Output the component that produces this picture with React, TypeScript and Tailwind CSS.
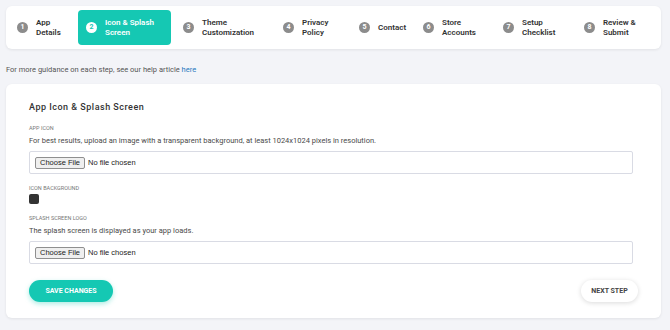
const steps = [
  { n: 1, a: "App", b: "Details", w: "w-[65px]" },
  { n: 2, a: "Icon & Splash", b: "Screen", w: "w-[93px]", active: true },
  { n: 3, a: "Theme", b: "Customization", w: "w-[96px]" },
  { n: 4, a: "Privacy", b: "Policy", w: "w-[72px]" },
  { n: 5, a: "Contact", b: "", w: "w-[60px]" },
  { n: 6, a: "Store", b: "Accounts", w: "w-[76px]" },
  { n: 7, a: "Setup", b: "Checklist", w: "w-[77px]" },
  { n: 8, a: "Review &", b: "Submit", w: "w-[77px]" },
]

function FileField() {
  return (
    <div className="mr-[5px] flex h-[23px] items-center rounded-[2px] border border-[#d9dbe4] bg-white pl-[5px] font-['Liberation_Sans',Arial,sans-serif] text-[7.5px] text-[#222]">
      <span className="flex h-[12px] items-center rounded-[2px] border border-[#8f8f8f] bg-[#efefef] px-[4px]">Choose File</span>
      <span className="ml-[3px]">No file chosen</span>
    </div>
  )
}

export default function App() {
  return (
    <div className="min-h-screen bg-[#f3f4f8] pl-[6px] pt-[6px] font-['Roboto',sans-serif]">
      <div className="w-[655px]">
        <div className="flex h-[43px] items-center gap-[4px] rounded-md bg-white pl-[3px] shadow-[0_1px_3px_rgba(0,0,0,0.08)]">
          {steps.map((s) => (
            <div
              key={s.n}
              className={`flex h-[35px] items-center gap-2 rounded-[4px] px-2 ${s.w} ${s.active ? "bg-[#15c8b3] text-white" : "text-[#333]"}`}
            >
              <span
                className={`flex h-[11px] w-[11px] shrink-0 items-center justify-center rounded-full text-[7px] font-bold ${s.active ? "bg-white text-[#15c8b3]" : "bg-[#8c8c8c] text-white"}`}
              >
                {s.n}
              </span>
              <div className="whitespace-nowrap text-[8px] font-semibold leading-[10px]">
                <div>{s.a}</div>
                {s.b && <div>{s.b}</div>}
              </div>
            </div>
          ))}
        </div>

        <p className="mt-[16px] text-[7.5px] leading-[10px] text-[#555]">
          For more guidance on each step, see our help article <span className="text-[#2a7bbf]">here</span>
        </p>

        <div className="mt-[9px] rounded-md bg-white px-[23px] pb-[16px] pt-[17px] shadow-[0_1px_3px_rgba(0,0,0,0.08)]">
          <h2 className="text-[9px] font-medium leading-[12px] tracking-[0.5px] text-[#333]">App Icon &amp; Splash Screen</h2>

          <div className="mt-[11px] text-[5.5px] uppercase leading-[8px] text-[#777]">App Icon</div>
          <p className="mt-[4px] text-[7.5px] leading-[10px] text-[#4a4a4a]">
            For best results, upload an image with a transparent background, at least 1024x1024 pixels in resolution.
          </p>
          <div className="mt-[5px]">
            <FileField />
          </div>

          <div className="mt-[10px] text-[5.5px] uppercase leading-[8px] text-[#777]">Icon Background</div>
          <div className="mt-[2px] h-[10px] w-[10px] rounded-[2px] bg-[#333]" />

          <div className="mt-[10px] text-[5.5px] uppercase leading-[8px] text-[#777]">Splash Screen Logo</div>
          <p className="mt-[4px] text-[7.5px] leading-[10px] text-[#4a4a4a]">The splash screen is displayed as your app loads.</p>
          <div className="mt-[5px]">
            <FileField />
          </div>

          <div className="mt-[16px] flex items-center justify-between">
            <button className="flex h-[22px] w-[84px] items-center justify-center rounded-full bg-[#15c8b3] text-[7px] font-bold uppercase text-white shadow-[0_2px_5px_rgba(21,200,179,0.35)]">
              Save Changes
            </button>
            <button className="flex h-[22px] w-[57px] items-center justify-center rounded-full bg-white text-[7px] font-bold uppercase text-[#444] shadow-[0_1px_5px_rgba(0,0,0,0.15)]">
              Next Step
            </button>
          </div>
        </div>
      </div>
    </div>
  )
}
